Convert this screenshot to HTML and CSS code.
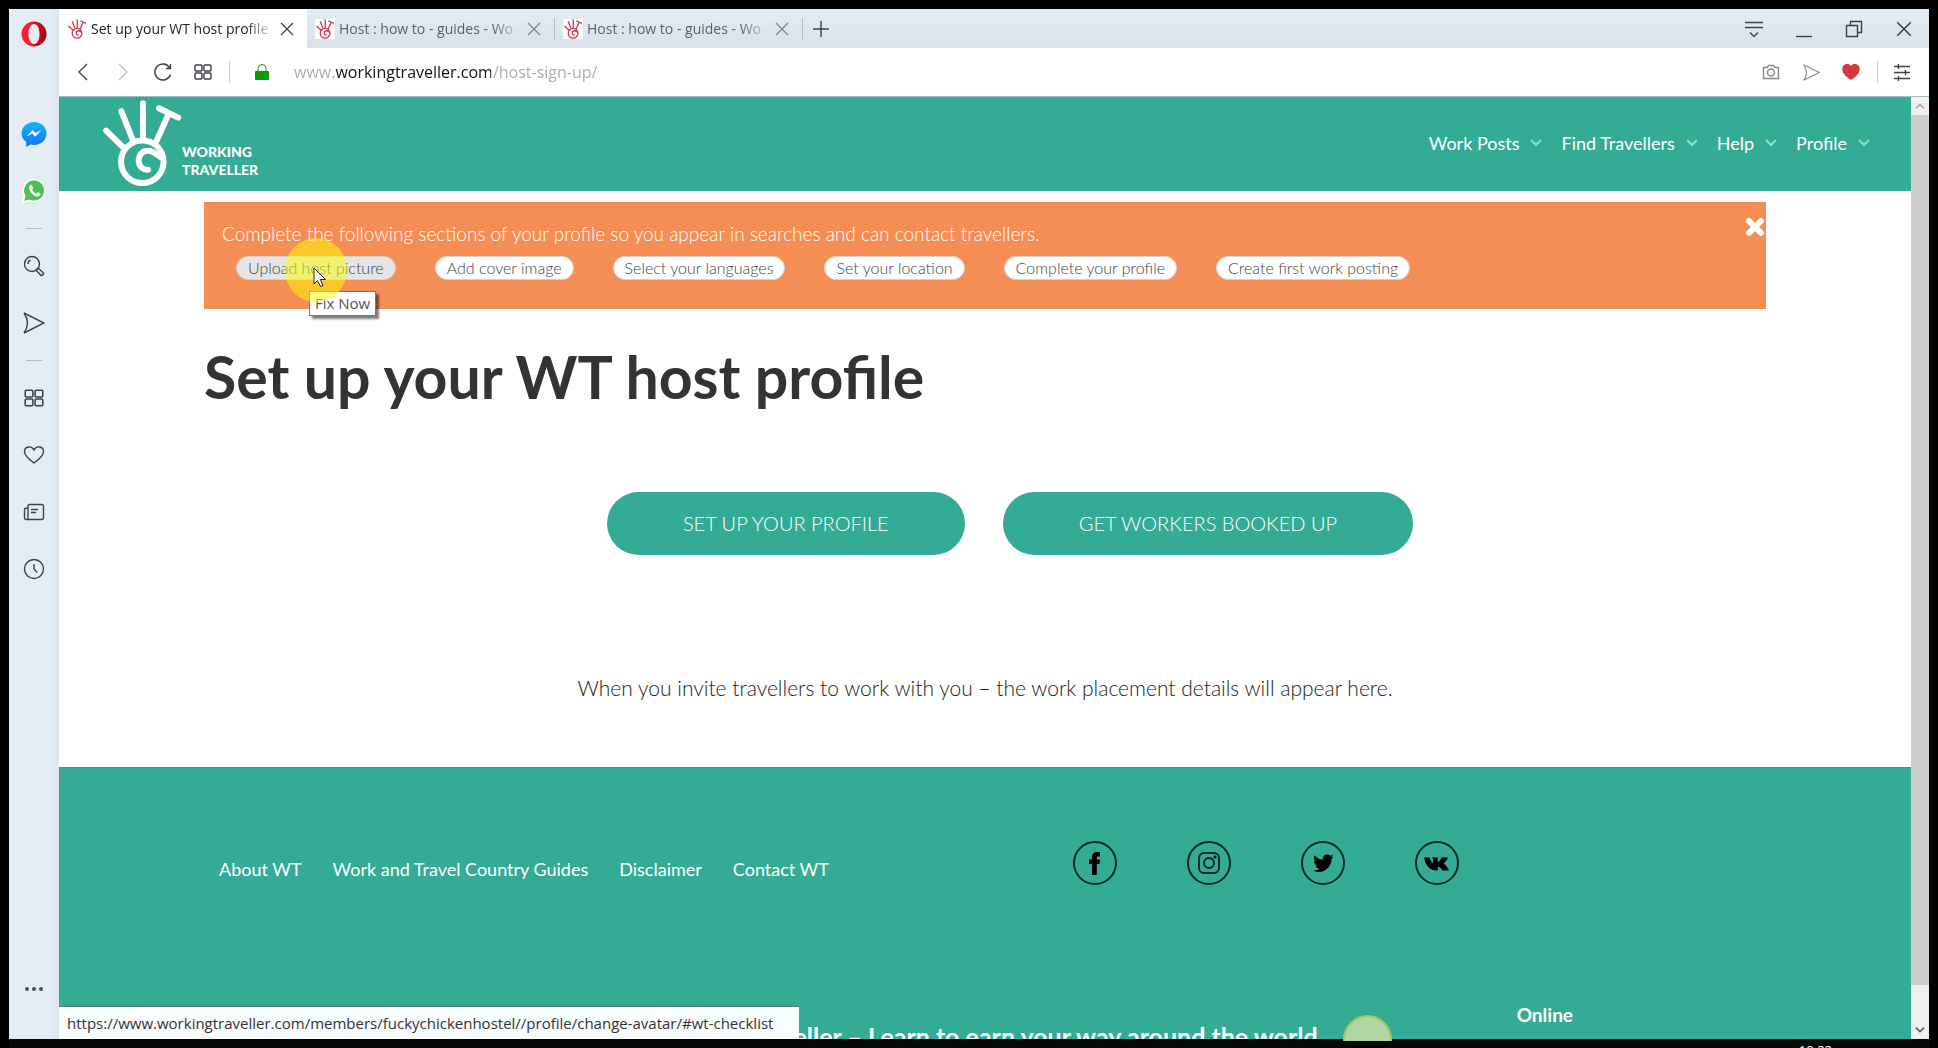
FILE: index.html
```html
<!DOCTYPE html>
<html lang="en">
<head>
    <meta charset="UTF-8">
    <meta name="viewport" content="width=device-width, initial-scale=1.0">
    <title>Set up your WT host profile</title>
    <link rel="stylesheet" href="styles.css">
</head>
<body>
    <!-- shared icon shapes -->
    <svg class="defs" aria-hidden="true">
        <symbol id="hand" viewBox="305 295 240 265">
            <g fill="none" stroke="currentColor" stroke-width="18" stroke-linecap="round" stroke-linejoin="round">
                <circle cx="426" cy="484" r="64"/>
                <path d="M317 390L370 442M363 332L396 415M428 308V415M503 345L467 425M476 323L534 351"/>
                <path d="M443 508C426 508 415 496 415 480C415 462 428 451 443 451C459 451 470 463 484 472"/>
            </g>
        </symbol>
        <symbol id="cross" viewBox="0 0 16 16"><path d="M2 2L14 14M14 2L2 14"/></symbol>
        <symbol id="grid" viewBox="0 0 20 20">
            <rect x="2" y="3" width="7" height="6" rx="1"/><rect x="11" y="3" width="7" height="6" rx="1"/>
            <rect x="2" y="11" width="7" height="6" rx="1"/><rect x="11" y="11" width="7" height="6" rx="1"/>
        </symbol>
        <symbol id="plane" viewBox="0 0 22 22"><path d="M1 1L21 11L1 21Q8 11 1 1Z"/></symbol>
        <symbol id="chevron" viewBox="0 0 12 8"><path d="M1 1L6 6L11 1"/></symbol>
    </svg>

    <div class="window">
        <!-- left sidebar -->
        <aside class="sidebar">
            <button class="opera" aria-label="Menu">
                <svg width="26" height="26" viewBox="0 0 26 26"><defs><linearGradient id="op" x1="0" x2="1"><stop offset=".3" stop-color="#ff1b2d"/><stop offset="1" stop-color="#9b0014"/></linearGradient></defs><path fill="url(#op)" fill-rule="evenodd" d="M13 .5A12.5 12.5 0 1 1 13 25.500A12.500 12.500 0 1 1 13 .5ZM13 3C9.500 3 7.500 7.500 7.500 13S9.500 23 13 23S18.500 18.500 18.500 13S16.500 3 13 3Z"/></svg>
            </button>
            <button aria-label="Messenger">
                <svg width="26" height="26" viewBox="0 0 26 26"><defs><linearGradient id="ms" x1="0" y1="0" x2="0" y2="1"><stop offset="0" stop-color="#12b5fb"/><stop offset="1" stop-color="#1673fb"/></linearGradient></defs><path fill="url(#ms)" d="M13 1C6 1 .5 6 .5 12.500C.5 16 2.500 19 5.200 21V26L9.500 23.500C10.600 23.800 11.800 24 13 24C20 24 25.500 19 25.500 12.500S20 1 13 1Z"/><path fill="#fff" d="M5.500 15.500L11.500 9L14.700 12L20.500 9L14.200 15.700L11.200 12.600Z"/></svg>
            </button>
            <button aria-label="WhatsApp">
                <svg width="26" height="26" viewBox="0 0 26 26"><path fill="#fff" d="M13.500 1A11.500 11.500 0 1 1 8 23.200L1 25L3 18.500A11.500 11.500 0 0 1 13.500 1Z"/><path fill="#4fbf55" d="M13.500 2.600A10 10 0 1 1 8.300 21.400L3.200 22.800L4.700 18A10 10 0 0 1 13.500 2.600Z"/><path fill="#fff" d="M8.500 8C9.500 6.500 10.800 7 11.200 8L12 10C12.200 10.800 11 11.300 11.200 12C12 13.600 13.300 14.800 15 15.500C15.800 15.600 16.300 14 17 14.200L19.300 15.400C19.800 16.500 18.700 18.300 16.800 18.400C12 18.400 7 12.500 8.500 8Z"/></svg>
            </button>
            <hr>
            <button aria-label="Search">
                <svg class="line" width="22" height="22" viewBox="0 0 22 22"><circle cx="9" cy="9" r="7.500"/><path d="M5 9Q5 6 7.500 5M13 15L15 13L20.500 18Q20.500 20.500 18 20.500Z"/></svg>
            </button>
            <button aria-label="My Flow">
                <svg class="line" width="22" height="22"><use href="#plane"/></svg>
            </button>
            <hr>
            <button aria-label="Speed Dial">
                <svg class="line" width="22" height="22"><use href="#grid"/></svg>
            </button>
            <button aria-label="Bookmarks">
                <svg class="line" width="22" height="22" viewBox="0 0 22 22"><path d="M11 19C6 15.500 1.500 12 1.500 7.500C1.500 2.500 8.500 1 11 6C13.500 1 20.500 2.500 20.500 7.500C20.500 12 16 15.500 11 19Z"/></svg>
            </button>
            <button aria-label="News">
                <svg class="line" width="22" height="22" viewBox="0 0 22 22"><path d="M5 18V5Q5 3.500 6.500 3.500H18.500Q20.500 3.500 20.500 5.500V16.500Q20.500 18.500 18.500 18.500H3.500Q1.500 18.500 1.500 16.500V8.500Q1.500 7 5 7M8 8.500H15M8 11.500H13"/></svg>
            </button>
            <button aria-label="History">
                <svg class="line" width="22" height="22" viewBox="0 0 22 22"><circle cx="11" cy="11" r="9.500"/><path d="M11 6V11L14 14.500"/></svg>
            </button>
            <button class="more" aria-label="More">
                <svg width="22" height="6" viewBox="0 0 22 6" fill="#4a5056"><circle cx="4" cy="3" r="2"/><circle cx="11" cy="3" r="2"/><circle cx="18" cy="3" r="2"/></svg>
            </button>
        </aside>

        <div class="main">
            <!-- tab bar -->
            <div class="tabs">
                <div class="tab active">
                    <svg class="favicon"><use href="#hand"/></svg>
                    <span class="tab-title">Set up your WT host profile</span>
                    <button aria-label="Close tab"><svg class="line" width="16" height="16"><use href="#cross"/></svg></button>
                </div>
                <div class="tab">
                    <svg class="favicon"><use href="#hand"/></svg>
                    <span class="tab-title">Host : how to - guides - Wo</span>
                    <button aria-label="Close tab"><svg class="line" width="16" height="16"><use href="#cross"/></svg></button>
                </div>
                <div class="tab">
                    <svg class="favicon"><use href="#hand"/></svg>
                    <span class="tab-title">Host : how to - guides - Wo</span>
                    <button aria-label="Close tab"><svg class="line" width="16" height="16"><use href="#cross"/></svg></button>
                </div>
                <button class="new-tab" aria-label="New tab"><svg class="line" width="16" height="16" viewBox="0 0 16 16"><path d="M8 0V16M0 8H16"/></svg></button>
                <div class="window-controls">
                    <button aria-label="Tab menu"><svg class="line" width="18" height="18" viewBox="0 0 18 18"><path d="M0 2.500H18M0 7.500H18M5 12.500L9 16.500L13 12.500"/></svg></button>
                    <button aria-label="Minimize"><svg class="line" width="18" height="18" viewBox="0 0 18 18"><path d="M1 16.500H17"/></svg></button>
                    <button aria-label="Restore"><svg class="line" width="18" height="18" viewBox="0 0 18 18"><path d="M1.500 5.500H12.500V16.500H1.500ZM5.500 5.500V1.500H16.500V12.500H12.500"/></svg></button>
                    <button aria-label="Close"><svg class="line" width="18" height="18"><use href="#cross"/></svg></button>
                </div>
            </div>

            <!-- address bar -->
            <div class="toolbar">
                <button aria-label="Back"><svg class="line" width="20" height="20" viewBox="0 0 20 20"><path d="M14 2L6 10L14 18"/></svg></button>
                <button aria-label="Forward"><svg class="line pale" width="20" height="20" viewBox="0 0 20 20"><path d="M6 2L14 10L6 18"/></svg></button>
                <button aria-label="Reload"><svg class="line" width="20" height="20" viewBox="0 0 20 20"><path d="M17.500 12.500A8 8 0 1 1 16.500 5.500M17.500 2V6.500H13"/></svg></button>
                <button aria-label="Speed Dial"><svg class="line" width="20" height="20"><use href="#grid"/></svg></button>
                <span class="divider"></span>
                <label class="lock" for="address" title="Secure"><svg width="14" height="18" viewBox="0 0 14 18"><path d="M3 9V5.500A4 4 0 0 1 11 5.500V9" fill="none" stroke="#0a9a0a"/><rect y="8" width="14" height="9" rx="1" fill="#0a9a0a"/></svg></label>
                <input class="address" id="address" type="text" value="www.workingtraveller.com/host-sign-up/" aria-label="Address">
                <button aria-label="Snapshot"><svg class="line grey" width="18" height="18" viewBox="0 0 18 18"><path d="M1.500 4.500H5L6.500 2.500H11.500L13 4.500H16.500V15.500H1.500Z"/><circle cx="9" cy="9.500" r="3.500"/></svg></button>
                <button aria-label="Send"><svg class="line grey" width="17" height="17"><use href="#plane"/></svg></button>
                <button aria-label="Bookmark"><svg width="18" height="18" viewBox="0 0 18 18"><path fill="#d8393c" d="M9 17C4 13.500 .3 10.500 .3 6C.3 1 6.500 -.5 9 3C11.500 -.5 17.700 1 17.700 6C17.700 10.500 14 13.500 9 17Z"/></svg></button>
                <span class="divider"></span>
                <button class="setup" aria-label="Easy setup"><svg class="line" width="18" height="18" viewBox="0 0 18 18"><path d="M1 3.500H17M1 9.500H17M1 15.500H17M5.500 1V6M12.500 7V12M5.500 13V18"/></svg></button>
            </div>

            <div class="viewport">
                <div class="page">
                    <header class="site-header">
                        <a class="logo" href="#">
                            <svg width="80" height="88"><use href="#hand"/></svg>
                            <span>WORKING<br>TRAVELLER</span>
                        </a>
                        <nav class="site-nav">
                            <a href="#">Work Posts <svg><use href="#chevron"/></svg></a>
                            <a href="#">Find Travellers <svg><use href="#chevron"/></svg></a>
                            <a href="#">Help <svg><use href="#chevron"/></svg></a>
                            <a href="#">Profile <svg><use href="#chevron"/></svg></a>
                        </nav>
                    </header>

                    <main class="content">
                        <section class="checklist">
                            <p>Complete the following sections of your profile so you appear in searches and can contact travellers.</p>
                            <div class="pills">
                                <div class="pill-wrap">
                                    <a class="pill hovered" href="#">Upload host picture</a>
                                    <span class="tooltip">Fix Now</span>
                                    <span class="halo"></span>
                                    <svg class="cursor" width="14" height="21" viewBox="0 0 14 21"><path d="M1 1V17L4.500 13.500L7.500 19.500L10 18.500L7.300 12.500H12.500Z" fill="#fff" stroke="#222"/></svg>
                                </div>
                                <a class="pill" href="#">Add cover image</a>
                                <a class="pill" href="#">Select your languages</a>
                                <a class="pill" href="#">Set your location</a>
                                <a class="pill" href="#">Complete your profile</a>
                                <a class="pill" href="#">Create first work posting</a>
                            </div>
                            <button class="dismiss" aria-label="Dismiss"><svg width="20" height="20" viewBox="0 0 20 20"><path d="M4 4L16 16M16 4L4 16" stroke="#fff" stroke-width="6" stroke-linecap="round"/></svg></button>
                        </section>

                        <h1>Set up your WT host profile</h1>
                        <div class="actions">
                            <a class="action" href="#">SET UP YOUR PROFILE</a>
                            <a class="action" href="#">GET WORKERS BOOKED UP</a>
                        </div>
                        <p class="note">When you invite travellers to work with you – the work placement details will appear here.</p>
                    </main>

                    <footer class="site-footer">
                        <div class="footer-top">
                            <nav class="footer-nav">
                                <a href="#">About WT</a>
                                <a href="#">Work and Travel Country Guides</a>
                                <a href="#">Disclaimer</a>
                                <a href="#">Contact WT</a>
                            </nav>
                            <div class="social">
                                <a href="#" aria-label="Facebook"><svg viewBox="0 0 44 44"><circle cx="22" cy="22" r="21"/><path class="solid" d="M19 34V23H16V18.500H19V16C19 12.500 21 11 24 11H27V15.500H25C24 15.500 23.800 16 23.800 17V18.500H27L26.500 23H23.800V34Z"/></svg></a>
                                <a href="#" aria-label="Instagram"><svg viewBox="0 0 44 44"><circle cx="22" cy="22" r="21"/><rect x="12" y="12" width="20" height="20" rx="5"/><circle cx="22" cy="22" r="5"/><circle class="solid" cx="28" cy="16" r="1.500"/></svg></a>
                                <a href="#" aria-label="Twitter"><svg viewBox="0 0 44 44"><circle cx="22" cy="22" r="21"/><path class="solid" d="M12.500 29.500C15 29.700 17 29 18.500 27.800C16.500 27.600 15 26.500 14.500 24.500H16.300C14 23.800 13 22 13 20L14.700 20.500C12.700 19 12.300 16.500 13.500 14.300C15.800 17 18.500 18.500 22 18.700C21.500 15.500 23.500 13.500 26 13.500C27.500 13.500 28.500 14 29.300 14.800L32 13.800L30.300 16.200L32.500 15.700L30.500 17.800C31 26.500 21 34.500 12.500 29.500Z"/></svg></a>
                                <a href="#" aria-label="VK"><svg viewBox="0 0 44 44"><circle cx="22" cy="22" r="21"/><path class="solid" d="M9 16.500H14.500C15.500 19.500 16.700 21.500 18.300 22.500V18.500L17 16.500H22.800V21.500C24.500 20.500 25.700 18.500 26.700 16.500H33C32 19.500 30 21 28.700 22.500C30.500 24 32.500 26 34 29.500H27.500C26.500 27.500 25 26 22.800 25.500V29.500H21C15 29.500 10.500 24.500 9 16.500Z"/></svg></a>
                            </div>
                        </div>
                        <div class="footer-bottom">
                            <h2>Working Traveller – Learn to earn your way around the world</h2>
                            <strong class="online">Online</strong>
                        </div>
                    </footer>
                </div>

                <!-- scrollbar -->
                <div class="scrollbar">
                    <svg class="up" width="10" height="8"><use href="#chevron"/></svg>
                    <span class="thumb"></span>
                    <svg class="down" width="10" height="8"><use href="#chevron"/></svg>
                </div>
                <div class="status">https://www.workingtraveller.com/members/fuckychickenhostel//profile/change-avatar/#wt-checklist</div>
            </div>
        </div>
        <span class="click-spot"></span>
    </div>
    <div class="taskbar"><time>10:22</time></div>
</body>
</html>
```
FILE: styles.css
```css
* {
    box-sizing: border-box;
}
body {
    margin: 0;
    height: 100vh;
    padding: 9px 9px 0;
    background: #000;
    overflow: hidden;
    display: flex;
    flex-direction: column;
    font-family: Lato, "Open Sans", sans-serif;
}
a {
    color: inherit;
    text-decoration: none;
}
button {
    display: flex;
    align-items: center;
    justify-content: center;
    padding: 0;
    border: none;
    background: none;
    cursor: pointer;
}
svg {
    display: block;
}
.defs {
    position: absolute;
    width: 0;
    height: 0;
}
.line {
    fill: none;
    stroke: #3c4248;
    stroke-width: 1.4;
}
.line.pale {
    stroke: #c4c4c4;
}
.line.grey {
    stroke: #8a8a8a;
}
.window {
    position: relative;
    flex: 1;
    min-height: 0;
    display: flex;
    background: #fff;
}

/* sidebar */
.sidebar {
    width: 50px;
    display: flex;
    flex-direction: column;
    background: linear-gradient(to right, #e4ecf4 75%, #dde5ee);
}
.sidebar button {
    height: 57px;
}
.sidebar .opera {
    height: 96px;
    padding-top: 12px;
    align-items: flex-start;
}
.sidebar hr {
    width: 16px;
    height: 1px;
    margin: 9px auto 8px;
    border: none;
    background: #b4bcc4;
}
.sidebar .more {
    margin-top: auto;
    margin-bottom: 22px;
}

/* browser bars */
.main {
    flex: 1;
    min-width: 0;
    display: flex;
    flex-direction: column;
    font-family: "Open Sans", "Noto Sans", sans-serif;
}
.tabs {
    height: 39px;
    display: flex;
    align-items: stretch;
    background: linear-gradient(#e4ecf4, #d8e0e9);
}
.tab {
    width: 248px;
    display: flex;
    align-items: center;
    gap: 4px;
    padding: 0 12px 0 8px;
    border-right: 1px solid #bcc4cc;
    border-image: linear-gradient(transparent 25%, #b4bcc4 25%, #b4bcc4 75%, transparent 75%) 1;
    color: #5c6268;
}
.tab.active {
    border: none;
    background: #fff;
    color: #222;
}
.favicon {
    width: 20px;
    height: 20px;
    flex: none;
    color: #d03a55;
    background: #fff;
}
.tab-title {
    flex: 1;
    overflow: hidden;
    white-space: nowrap;
    font-size: 14px;
    line-height: 24px;
    -webkit-mask-image: linear-gradient(to right, #000 84%, transparent);
    mask-image: linear-gradient(to right, #000 84%, transparent);
}
.tab .line {
    stroke-width: 1.2;
}
.tab:not(.active) .line {
    stroke: #7c8288;
}
.new-tab {
    width: 36px;
}
.window-controls {
    margin-left: auto;
    display: flex;
}
.window-controls button {
    width: 50px;
}
.toolbar {
    height: 49px;
    display: flex;
    align-items: center;
    padding: 0 9px 0 4px;
    border-bottom: 1px solid #9fc0c4;
}
.toolbar button {
    width: 40px;
    height: 40px;
}
.divider {
    width: 1px;
    height: 22px;
    margin: 0 6px;
    background: #ccc;
}
.lock {
    padding: 0 25px 0 19px;
}
.address {
    flex: 1;
    min-width: 0;
    padding: 0;
    border: none;
    outline: none;
    font: 16px "Open Sans", "Noto Sans", sans-serif;
    color: transparent;
    /* host name dark, the rest of the url pale */
    background: linear-gradient(to right, #aaa 40px, #111 40px, #111 197px, #aaa 197px);
    -webkit-background-clip: text;
    background-clip: text;
}
.toolbar .setup {
    width: 36px;
}

/* page area */
.viewport {
    position: relative;
    flex: 1;
    min-height: 0;
    display: flex;
    overflow: hidden;
}
.page {
    flex: 1;
    font-family: Lato, sans-serif;
}
.scrollbar {
    width: 18px;
    display: flex;
    flex-direction: column;
    align-items: center;
    padding: 5px 0;
    gap: 5px;
    background: #f0f0f0;
    fill: none;
    stroke: #555;
    stroke-width: 2;
}
.scrollbar .up {
    transform: rotate(180deg);
    stroke: #aaa;
}
.thumb {
    width: 100%;
    height: 870px;
    background: #cdcdcd;
}
.scrollbar .down {
    margin-top: auto;
}
.status {
    position: absolute;
    left: 0;
    bottom: 0;
    padding: 0 26px 0 8px;
    border-top: 1px solid #5a7f78;
    background: #fafdfe;
    color: #333;
    font-size: 15px;
    line-height: 32px;
}

/* site header */
.site-header {
    height: 94px;
    display: flex;
    align-items: center;
    justify-content: space-between;
    padding: 0 41px 2px 43px;
    background: #33ab95;
    color: #fff;
}
.logo {
    display: flex;
    align-items: flex-end;
}
.logo span {
    padding-bottom: 8px;
    font-size: 14px;
    font-weight: 900;
    line-height: 18px;
}
.site-nav {
    display: flex;
    gap: 19px;
    font-size: 18px;
}
.site-nav a {
    display: flex;
    align-items: center;
    gap: 11px;
}
.site-nav svg {
    width: 12px;
    height: 8px;
    fill: none;
    stroke: #8fe0cd;
    stroke-width: 2;
}

/* content */
.content {
    max-width: 1562px;
    margin: 0 auto;
    padding-top: 11px;
}
.checklist {
    position: relative;
    height: 107px;
    padding: 20px 18px;
    background: #f58e55;
}
.checklist p {
    margin: 0 0 10px;
    color: #fff;
    font-size: 19px;
    font-weight: 300;
    line-height: 24px;
}
.pills {
    display: flex;
    gap: 39px;
    padding-left: 14px;
}
.pill-wrap {
    position: relative;
}
.pill {
    display: block;
    padding: 0 11px;
    border: 1px solid #d8cfc8;
    border-radius: 12px;
    background: #fff;
    color: #444;
    font-size: 16px;
    font-weight: 300;
    line-height: 22px;
}
.pill.hovered {
    background: #e5e5e5;
}
.tooltip {
    position: absolute;
    left: 73px;
    top: 35px;
    padding: 0 5px;
    border: 1px solid #777;
    background: #fff;
    box-shadow: 3px 3px 2px rgba(0, 0, 0, 0.5);
    color: #555;
    font: 15px/23px "Open Sans", sans-serif;
    white-space: nowrap;
}
.halo {
    position: absolute;
    left: 49px;
    top: -18px;
    width: 62px;
    height: 64px;
    border-radius: 50%;
    background: rgba(255, 255, 0, 0.5);
}
.cursor {
    position: absolute;
    left: 77px;
    top: 11px;
}
.dismiss {
    position: absolute;
    right: 1px;
    top: 15px;
}
h1 {
    margin: 26px 0 73px;
    color: #333;
    font-size: 59px;
    line-height: 84px;
}
.actions {
    display: flex;
    justify-content: center;
    gap: 38px;
    padding-left: 50px;
}
.action {
    padding: 0 76px;
    border-radius: 32px;
    background: #33ab95;
    color: #fff;
    font-size: 20px;
    font-weight: 300;
    line-height: 63px;
}
.note {
    margin: 0;
    padding: 116px 0 63px;
    color: #222;
    font-size: 21px;
    font-weight: 300;
    line-height: 33px;
    text-align: center;
}

/* footer */
.site-footer {
    border-top: 1px solid #a0666e;
    background: #33ab95;
    color: #fff;
}
.footer-top {
    display: flex;
    align-items: center;
    padding: 73px 0 0 160px;
}
.footer-nav {
    width: 854px;
    display: flex;
    gap: 31px;
    padding-top: 12px;
    font-size: 18px;
}
.social {
    display: flex;
    gap: 70px;
}
.social svg {
    width: 44px;
    height: 44px;
    fill: none;
    stroke: #0b2a24;
    stroke-width: 2;
}
.social .solid {
    fill: #000;
    stroke: none;
}
.footer-bottom {
    display: flex;
    justify-content: flex-end;
    gap: 199px;
    padding: 117px 338px 40px 0;
}
.footer-bottom h2 {
    margin: 18px 0 0;
    font-size: 25px;
    line-height: 32px;
}
.online {
    font-size: 19px;
    line-height: 26px;
}
.click-spot {
    position: absolute;
    right: 537px;
    bottom: -2px;
    width: 49px;
    height: 26px;
    border: 2px solid #a9c655;
    border-bottom: none;
    border-radius: 25px 25px 0 0;
    background: #aed6a4;
}
.taskbar {
    height: 9px;
    padding: 3px 97px 0 0;
    overflow: hidden;
    background: #080808;
    color: #fff;
    text-align: right;
    font: 13px/16px "Open Sans", sans-serif;
}
```
